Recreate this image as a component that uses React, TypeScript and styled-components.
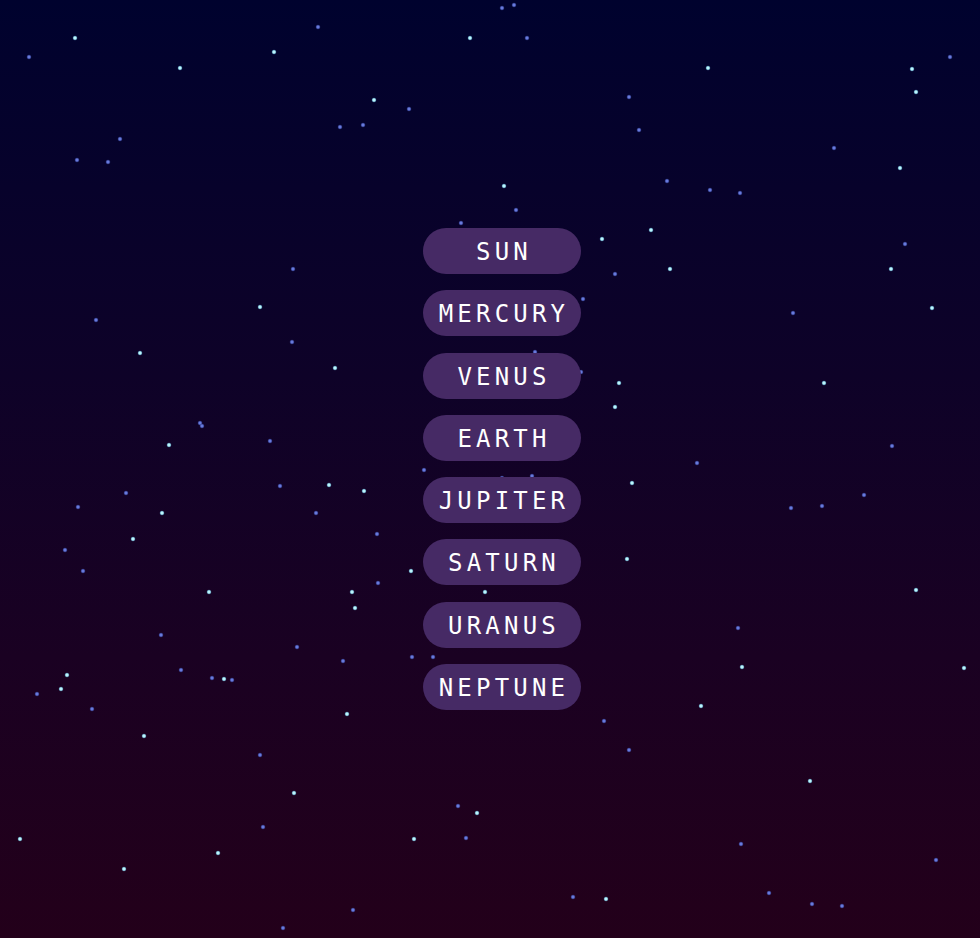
import React from "react";
import styled, { createGlobalStyle } from "styled-components";

const Global = createGlobalStyle`
  html, body { margin: 0; padding: 0; }
  body { background: #0e0124; }
`;

const Sky = styled.div`
  position: relative;
  width: 980px;
  height: 938px;
  overflow: hidden;
  background: linear-gradient(180deg, #00022e 0%, #0e0228 40%, #1a0122 70%, #23001a 100%);
`;

const StarLayer = styled.svg`
  position: absolute;
  inset: 0;
  width: 100%;
  height: 100%;
`;

const Menu = styled.nav`
  position: relative;
  display: flex;
  flex-direction: column;
  align-items: center;
  gap: 16.3px;
  padding: 228px 0 0 24px;
`;

const PlanetButton = styled.button`
  width: 158px;
  height: 46px;
  border: none;
  border-radius: 23px;
  background: #462a65;
  color: #ffffff;
  font-family: "DejaVu Sans Mono", "Liberation Mono", monospace;
  font-size: 24px;
  letter-spacing: 4.2px;
  padding: 2px 0 0 4px;
  display: flex;
  align-items: center;
  justify-content: center;
  cursor: pointer;
  -webkit-font-smoothing: none;
`;

type Star = [number, number, 0 | 1];

const stars: Star[] = [
  [75, 38, 1], [29, 57, 0], [180, 68, 1], [274, 52, 1], [318, 27, 0], [470, 38, 1], [502, 8, 0], [514, 5, 0],
  [527, 38, 0], [708, 68, 1], [912, 69, 1], [950, 57, 0], [916, 92, 1], [629, 97, 0], [639, 130, 0], [374, 100, 1],
  [409, 109, 0], [340, 127, 0], [363, 125, 0], [120, 139, 0], [77, 160, 0], [108, 162, 0], [834, 148, 0], [900, 168, 1],
  [667, 181, 0], [710, 190, 0], [740, 193, 0], [504, 186, 1], [516, 210, 0], [461, 223, 0], [651, 230, 1], [602, 239, 1],
  [905, 244, 0], [891, 269, 1], [670, 269, 1], [615, 274, 0], [293, 269, 0], [260, 307, 1], [583, 299, 0], [932, 308, 1],
  [96, 320, 0], [793, 313, 0], [292, 342, 0], [140, 353, 1], [335, 368, 1], [535, 352, 0], [581, 372, 0], [619, 383, 1],
  [824, 383, 1], [615, 407, 1], [200, 423, 0], [202, 426, 0], [169, 445, 1], [270, 441, 0], [892, 446, 0], [424, 470, 0],
  [502, 478, 0], [532, 476, 0], [697, 463, 0], [632, 483, 1], [329, 485, 1], [364, 491, 1], [280, 486, 0], [126, 493, 0],
  [78, 507, 0], [162, 513, 1], [316, 513, 0], [791, 508, 0], [822, 506, 0], [864, 495, 0], [377, 534, 0], [133, 539, 1],
  [65, 550, 0], [83, 571, 0], [411, 571, 1], [627, 559, 1], [378, 583, 0], [209, 592, 1], [352, 592, 1], [355, 608, 1],
  [485, 592, 1], [916, 590, 1], [738, 628, 0], [161, 635, 0], [297, 647, 0], [343, 661, 0], [412, 657, 0], [433, 657, 0],
  [742, 667, 1], [964, 668, 1], [67, 675, 1], [181, 670, 0], [212, 678, 0], [224, 679, 1], [232, 680, 0], [61, 689, 1],
  [37, 694, 0], [92, 709, 0], [701, 706, 1], [347, 714, 1], [604, 721, 0], [144, 736, 1], [629, 750, 0], [260, 755, 0],
  [810, 781, 1], [294, 793, 1], [458, 806, 0], [477, 813, 1], [263, 827, 0], [20, 839, 1], [414, 839, 1], [466, 838, 0],
  [741, 844, 0], [218, 853, 1], [936, 860, 0], [124, 869, 1], [573, 897, 0], [606, 899, 1], [769, 893, 0], [812, 904, 0],
  [842, 906, 0], [353, 910, 0], [283, 928, 0],
];

const planets = ["SUN", "MERCURY", "VENUS", "EARTH", "JUPITER", "SATURN", "URANUS", "NEPTUNE"];

export default function App() {
  return (
    <>
      <Global />
      <Sky>
        <StarLayer viewBox="0 0 980 938" xmlns="http://www.w3.org/2000/svg">
          <defs>
            <radialGradient id="bright">
              <stop offset="0%" stopColor="#d8ffff" />
              <stop offset="50%" stopColor="#a4ecf8" />
              <stop offset="100%" stopColor="#5aa6d8" stopOpacity="0" />
            </radialGradient>
            <radialGradient id="dim">
              <stop offset="0%" stopColor="#7d8ef0" />
              <stop offset="50%" stopColor="#5668c8" />
              <stop offset="100%" stopColor="#3848a0" stopOpacity="0" />
            </radialGradient>
          </defs>
          {stars.map(([x, y, b], i) => (
            <circle key={i} cx={x} cy={y} r={2.7} fill={b ? "url(#bright)" : "url(#dim)"} />
          ))}
        </StarLayer>
        <Menu>
          {planets.map((p) => (
            <PlanetButton key={p}>{p}</PlanetButton>
          ))}
        </Menu>
      </Sky>
    </>
  );
}
